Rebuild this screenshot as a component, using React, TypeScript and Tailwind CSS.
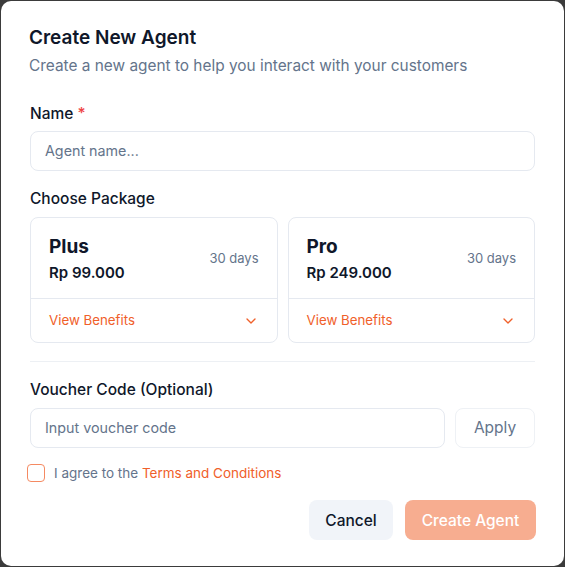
import { ChevronDown } from "lucide-react";

const packages = [
  { name: "Plus", price: "Rp 99.000", period: "30 days" },
  { name: "Pro", price: "Rp 249.000", period: "30 days" },
];

function PackageCard({ name, price, period }: { name: string; price: string; period: string }) {
  return (
    <div className="flex-1 rounded-lg border border-[#e5e9f0] bg-white">
      <div className="flex items-center justify-between px-[18px] pt-[16px] pb-[14px]">
        <div>
          <div className="text-[19px] font-bold leading-[26px] text-[#0f172a]">{name}</div>
          <div className="mt-[2px] text-[15px] font-semibold leading-[22px] text-[#0f172a]">{price}</div>
        </div>
        <div className="text-[13px] text-[#64748b]">{period}</div>
      </div>
      <div className="flex h-[44px] items-center justify-between border-t border-[#e5e9f0] px-[18px]">
        <span className="text-[13.3px] text-[#f0602a]">View Benefits</span>
        <ChevronDown className="h-4 w-4 text-[#f0602a]" strokeWidth={2} />
      </div>
    </div>
  );
}

export default function App() {
  return (
    <div className="h-[567px] w-[565px] bg-[#3b3b3b] p-px" style={{ fontFamily: "Inter, 'Noto Sans', sans-serif" }}>
      <div className="flex h-full w-full flex-col rounded-[10px] bg-white">
        <div className="px-[28px] pt-[24px]">
          <h2 className="text-[19px] font-semibold leading-[26px] text-[#0f172a]">Create New Agent</h2>
          <p className="mt-[4px] text-[15.4px] leading-[22px] text-[#64748b]">
            Create a new agent to help you interact with your customers
          </p>
        </div>

        <div className="px-[29px] pt-[24px]">
          <label className="text-[15.5px] font-medium leading-[20px] text-[#0f172a]">
            Name <span className="text-[#ef4444]">*</span>
          </label>
          <div className="mt-[6px] flex h-[40px] items-center rounded-lg border border-[#e5e9f0] px-[14px] text-[14.3px] text-[#64748b]">
            Agent name...
          </div>

          <div className="mt-[18px] text-[15.5px] font-medium leading-[20px] text-[#0f172a]">Choose Package</div>
          <div className="mt-[8px] flex gap-[10px]">
            {packages.map((p) => (
              <PackageCard key={p.name} {...p} />
            ))}
          </div>

          <div className="mt-[18px] h-px bg-[#edf0f4]" />

          <div className="mt-[17px] text-[15.5px] font-medium leading-[22px] text-[#0f172a]">Voucher Code (Optional)</div>
          <div className="mt-[7px] flex gap-[10px]">
            <div className="flex h-[40px] flex-1 items-center rounded-lg border border-[#e5e9f0] px-[14px] text-[14.3px] text-[#64748b]">
              Input voucher code
            </div>
            <div className="flex h-[40px] w-[80px] items-center justify-center rounded-lg border border-[#eef1f5] text-[15.5px] text-[#64748b]">
              Apply
            </div>
          </div>
        </div>

        <div className="mt-[15px] flex items-center gap-[9px] px-[26px]">
          <div className="h-[18px] w-[18px] rounded-[4px] border-[1.5px] border-[#f58a62]" />
          <span className="text-[13.5px] text-[#64748b]">
            I agree to the <span className="text-[#f0602a]">Terms and Conditions</span>
          </span>
        </div>

        <div className="mt-[17px] flex justify-end gap-[12px] pr-[28px]">
          <button className="h-[40px] w-[84px] rounded-lg bg-[#f1f4f9] text-[15.5px] font-medium text-[#0f172a]">Cancel</button>
          <button className="h-[40px] w-[131px] rounded-lg bg-[#f7ad90] text-[15.5px] font-medium text-white">Create Agent</button>
        </div>
      </div>
    </div>
  );
}
